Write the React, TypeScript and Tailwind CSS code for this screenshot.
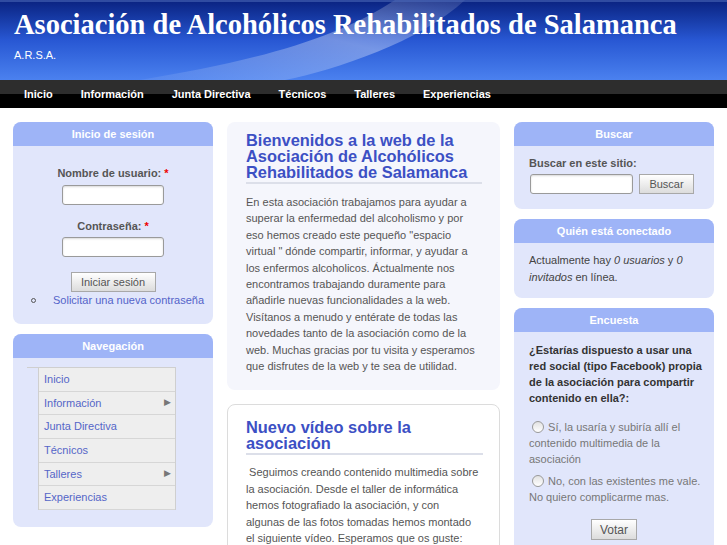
import React from 'react';

const topMenu = ['Inicio', 'Información', 'Junta Directiva', 'Técnicos', 'Talleres', 'Experiencias'];

const sideMenu = [
  { label: 'Inicio', sub: false },
  { label: 'Información', sub: true },
  { label: 'Junta Directiva', sub: false },
  { label: 'Técnicos', sub: false },
  { label: 'Talleres', sub: true },
  { label: 'Experiencias', sub: false },
];

const Block: React.FC<{ title: string; className?: string; children: React.ReactNode }> = ({ title, className, children }) => (
  <div className={`rounded-[8px] bg-[#e1e6fb] ${className ?? ''}`}>
    <div className="h-[24px] rounded-t-[8px] bg-[#9eb4f7] text-center text-[11px] font-bold leading-[24px] text-white">
      {title}
    </div>
    {children}
  </div>
);

const Button: React.FC<{ label: string; className?: string }> = ({ label, className }) => (
  <button
    className={`h-[20px] border border-[#a8a8a8] bg-gradient-to-b from-white to-[#dcdcdc] text-[11px] text-[#555] ${className ?? ''}`}
  >
    {label}
  </button>
);

const Input: React.FC<{ className?: string }> = ({ className }) => (
  <input
    type="text"
    className={`h-[20px] rounded-[3px] border border-[#9a9a9a] bg-white shadow-[inset_0_1px_2px_rgba(0,0,0,0.15)] ${className ?? ''}`}
  />
);

const Radio: React.FC = () => (
  <span className="mr-[4px] inline-block h-[12px] w-[12px] translate-y-[2px] rounded-full border border-[#999] bg-gradient-to-b from-[#e2e2e2] to-white" />
);

export default function App() {
  return (
    <div className="min-h-[545px] bg-white font-['Liberation_Sans',Arial,sans-serif]">
      {/* cabecera */}
      <header className="relative h-[80px] overflow-hidden bg-gradient-to-b from-[#0a2280] via-[#2857d3] to-[#4b81ef]">
        <svg className="absolute inset-0 h-full w-full" viewBox="0 0 727 80" preserveAspectRatio="none">
          <defs>
            <linearGradient id="sw" x1="0" y1="1" x2="1" y2="0">
              <stop offset="0" stopColor="#ffffff" stopOpacity="0.06" />
              <stop offset="0.55" stopColor="#ffffff" stopOpacity="0.34" />
              <stop offset="1" stopColor="#ffffff" stopOpacity="0.12" />
            </linearGradient>
          </defs>
          <path d="M140 80 C 250 62, 335 40, 395 0 L 465 0 C 420 42, 335 70, 285 80 Z" fill="url(#sw)" />
          <path d="M0 0 L727 0 L727 2 L0 2 Z" fill="#4a68b8" opacity="0.6" />
        </svg>
        <div className="relative pl-[14px] pt-[11px]">
          <h1 className="font-['Liberation_Serif','Times_New_Roman',serif] text-[28.5px] font-bold leading-[28.5px] text-white">
            Asociación de Alcohólicos Rehabilitados de Salamanca
          </h1>
          <div className="mt-[9px] text-[11px] leading-[12px] text-white">A.R.S.A.</div>
        </div>
      </header>

      {/* menú principal */}
      <nav className="flex h-[28px] items-center bg-[linear-gradient(to_bottom,#2d2d2d_50%,#000_50%)] pl-[10px]">
        {topMenu.map((item) => (
          <a key={item} className="px-[14px] text-[11px] font-bold leading-[14px] text-white">
            {item}
          </a>
        ))}
      </nav>

      <main className="flex gap-[14px] pl-[13px] pt-[14px]">
        {/* columna izquierda */}
        <aside className="flex w-[200px] shrink-0 flex-col gap-[10px]">
          <Block title="Inicio de sesión" className="h-[202px]">
            <div className="flex flex-col items-center pt-[20px]">
              <label className="text-[11px] font-bold leading-[14px] text-[#555]">
                Nombre de usuario: <span className="text-[#e00]">*</span>
              </label>
              <Input className="mt-[5px] w-[102px]" />
              <label className="mt-[14px] text-[11px] font-bold leading-[14px] text-[#555]">
                Contraseña: <span className="text-[#e00]">*</span>
              </label>
              <Input className="mt-[4px] w-[102px]" />
              <Button label="Iniciar sesión" className="mt-[15px] w-[85px]" />
            </div>
            <div className="mt-[1px] flex items-center pl-[18px] text-[11px] leading-[14px]">
              <span className="h-[5px] w-[5px] rounded-full border border-[#555]" />
              <a className="ml-[17px] text-[#5464c9]">Solicitar una nueva contraseña</a>
            </div>
          </Block>

          <Block title="Navegación" className="h-[193px]">
            <div className="flex pt-[9px] pl-[14px]">
              <span className="h-0 w-[11px] border-t border-[#cfcfcf]" />
              <ul className="w-[138px] border-x border-t border-[#cfcfcf] bg-[#eeeeee]">
                {sideMenu.map((item) => (
                  <li
                    key={item.label}
                    className="flex h-[23.67px] items-center justify-between border-b border-[#d6d6d6] pl-[5px] pr-[4px] text-[11px] text-[#5566c8]"
                  >
                    <span>{item.label}</span>
                    {item.sub && <span className="text-[9px] text-[#777]">▶</span>}
                  </li>
                ))}
              </ul>
            </div>
          </Block>
        </aside>

        {/* columna central */}
        <section className="flex w-[273px] shrink-0 flex-col gap-[14px]">
          <article className="rounded-[8px] bg-[#f5f6fc] pb-[16px] pl-[19px] pr-[18px] pt-[10px]">
            <h2 className="border-b-2 border-[#dcdfe9] pb-[2px] text-[16.4px] font-bold leading-[16px] text-[#3c50c4]">
              Bienvenidos a la web de la Asociación de Alcohólicos Rehabilitados de Salamanca
            </h2>
            <p className="mt-[10px] text-[11px] leading-[16.4px] text-[#555]">
              En esta asociación trabajamos para ayudar a superar la enfermedad del alcoholismo y por eso hemos
              creado este pequeño "espacio virtual " dónde compartir, informar, y ayudar a los enfermos alcoholicos.
              Áctualmente nos encontramos trabajando duramente para añadirle nuevas funcionalidades a la web.
              Visítanos a menudo y entérate de todas las novedades tanto de la asociación como de la web. Muchas
              gracias por tu visita y esperamos que disfrutes de la web y te sea de utilidad.
            </p>
          </article>

          <article className="h-[200px] rounded-[8px] border border-[#dcdcdc] bg-white pl-[18px] pr-[16px] pt-[14px]">
            <h2 className="border-b-2 border-[#dcdfe9] pb-[2px] text-[16.4px] font-bold leading-[16px] text-[#3c50c4]">
              Nuevo vídeo sobre la asociación
            </h2>
            <p className="mt-[9px] text-[11px] leading-[16.4px] text-[#555]">
              &nbsp;Seguimos creando contenido multimedia sobre la asociación. Desde el taller de informática hemos
              fotografiado la asociación, y con
              <br />
              algunas de las fotos tomadas hemos montado
              <br />
              el siguiente vídeo. Esperamos que os guste:
            </p>
          </article>
        </section>

        {/* columna derecha */}
        <aside className="flex w-[200px] shrink-0 flex-col gap-[10px]">
          <Block title="Buscar" className="pb-[15px]">
            <div className="pl-[15px] pt-[10px]">
              <div className="text-[11px] font-bold leading-[14px] text-[#555]">Buscar en este sitio:</div>
              <div className="mt-[4px] flex gap-[6px] pl-[1px]">
                <Input className="w-[103px]" />
                <Button label="Buscar" className="w-[55px]" />
              </div>
            </div>
          </Block>

          <Block title="Quién está conectado" className="pb-[12px]">
            <p className="px-[15px] pt-[9px] text-[11px] leading-[17px] text-[#444]">
              Actualmente hay <em>0 usuarios</em> y <em>0 invitados</em> en línea.
            </p>
          </Block>

          <Block title="Encuesta" className="h-[260px]">
            <div className="pl-[15px] pr-[6px] pt-[10px]">
              <p className="text-[11px] font-bold leading-[16px] text-[#333]">
                ¿Estarías dispuesto a usar una
                <br />
                red social (tipo Facebook) propia de la asociación para compartir contenido en ella?:
              </p>
              <p className="mt-[13px] text-[11px] leading-[16px] text-[#777]">
                &nbsp;<Radio />
                Sí, la usaría y subiría allí el
                <br />
                contenido multimedia de la asociación
              </p>
              <p className="mt-[6px] text-[11px] leading-[16px] text-[#777]">
                &nbsp;<Radio />
                No, con las existentes me vale.
                <br />
                No quiero complicarme mas.
              </p>
              <div className="mt-[14px] flex justify-center pr-[9px]">
                <Button label="Votar" className="h-[21px] w-[46px] text-[12px]" />
              </div>
            </div>
          </Block>
        </aside>
      </main>
    </div>
  );
}
